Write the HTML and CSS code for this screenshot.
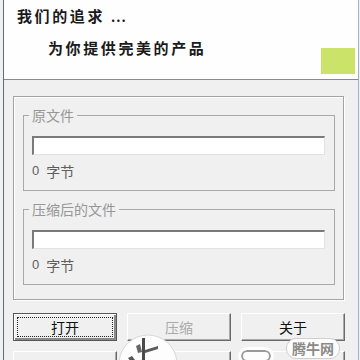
FILE: index.html
```html
<!DOCTYPE html>
<html lang="zh-CN">
<head>
<meta charset="utf-8">
<title>压缩</title>
<link rel="stylesheet" href="styles.css">
</head>
<body>
<div class="frame">
  <header class="banner">
    <div class="slogan">
      <p class="line1">我们的追求 <span class="dots">...</span></p>
      <p class="line2">为你提供完美的产品</p>
    </div>
    <div class="accent"></div>
  </header>
  <main class="content">
    <div class="outer">
      <fieldset class="group">
        <legend>原文件</legend>
        <div class="field"></div>
        <div class="size"><span class="num">0</span><span>字节</span></div>
      </fieldset>
      <fieldset class="group second-group">
        <legend>压缩后的文件</legend>
        <div class="field"></div>
        <div class="size"><span class="num">0</span><span>字节</span></div>
      </fieldset>
    </div>
    <div class="buttons">
      <button class="btn default"><span class="focus">打开</span></button>
      <button class="btn" disabled>压缩</button>
      <button class="btn">关于</button>
    </div>
    <div class="buttons lower">
      <button class="btn"></button>
      <button class="btn"></button>
      <button class="btn"></button>
    </div>
  </main>
  <div class="wm-circle">
    <svg width="60" height="60" viewBox="0 0 60 60">
      <circle cx="30" cy="30" r="29" fill="#fdfdfd" stroke="#d8d8d8" stroke-width="1"/>
      <path d="M24 4 L27 4 L27 30 L24 30 Z" fill="#4a4a4a"/>
      <path d="M10 24 L14 22 L20 30 L16 32 Z" fill="#555"/>
      <path d="M27 16 L40 12 L40 15 L27 19 Z" fill="#5a5a5a"/>
      <path d="M18 12 L22 10 L24 18 L20 19 Z" fill="#666"/>
    </svg>
  </div>
  <div class="wm-ring"></div>
  <div class="wm-badge">腾牛网</div>
</div>
</body>
</html>
```

FILE: styles.css
```css
* { box-sizing: border-box; }
html, body { margin: 0; padding: 0; background: #f0f0f0; }
body { width: 360px; height: 360px; overflow: hidden; font-family: "Noto Sans CJK SC", "Liberation Sans", sans-serif; }

.frame {
  position: relative;
  width: 356px;
  height: 360px;
  margin-left: 3px;
  border-left: 1px solid #5f6b78;
  border-right: 1px solid #9fb2cc;
  overflow: hidden;
  background: #f0f0f0;
}

.banner {
  height: 80px;
  background: #fefefe;
  border-bottom: 1px solid #8a8a8a;
  display: flex;
  padding-right: 3px;
}
.slogan { flex: 1; }
.slogan p {
  margin: 0;
  font-size: 15px;
  line-height: 20px;
  font-weight: 700;
  color: #1a1a1a;
  letter-spacing: 2.6px;
}
.dots { letter-spacing: 1px; font-size: 13px; }
.line1 { margin-top: 6px !important; padding-left: 13px; }
.line2 { margin-top: 11px !important; padding-left: 44px; }
.accent {
  align-self: flex-end;
  width: 34px;
  height: 26px;
  margin-bottom: 5px;
  background: #cce36a;
}

.content { padding: 16px 0 0 9px; }

.outer {
  width: 331px;
  border: 1px solid #a3a3a3;
  box-shadow: inset 1px 1px 0 #fff, 1px 1px 0 #fff;
  padding: 10px 9px 14px 9px;
}

.group {
  margin: 0;
  width: 312px;
  border: 1px solid #a8a8a8;
  padding: 13px 9px 11px 8px;
  min-width: 0;
}
.second-group { margin-top: 10px; }
.group legend {
  font-size: 14px;
  line-height: 16px;
  color: #979797;
  padding: 0 3px;
  margin-left: -3px;
}
.field {
  height: 19px;
  background: #fff;
  border-top: 2px solid #7a7a7a;
  border-left: 2px solid #7a7a7a;
  border-bottom: 1px solid #e2e2e2;
  border-right: 1px solid #e2e2e2;
}
.size {
  margin-top: 8px;
  font-size: 14px;
  line-height: 16px;
  color: #5e5e5e;
  display: flex;
  gap: 7px;
}
.num { font-family: "Liberation Sans", sans-serif; font-size: 13px; }

.buttons {
  margin-top: 13px;
  width: 332px;
  display: grid;
  grid-template-columns: repeat(3, 1fr);
  column-gap: 10px;
}
.buttons.lower { margin-top: 10px; }
.btn {
  height: 28px;
  margin: 0;
  padding: 0;
  background: #f0f0f0;
  border: 1px solid;
  border-color: #ffffff #6b6b6b #6b6b6b #ffffff;
  box-shadow: inset -1px -1px 0 #a8a8a8;
  font-family: "Noto Sans CJK SC", sans-serif;
  font-size: 14px;
  color: #111;
  display: flex;
  align-items: center;
  justify-content: center;
}
.btn:disabled { color: #a9a9a9; }
.btn.default {
  border: 1px solid #555;
  box-shadow: inset 1px 1px 0 #fff, inset -2px -2px 0 #8a8a8a;
  padding: 3px;
}
.focus {
  flex: 1;
  align-self: stretch;
  border: 1px dotted #222;
  display: flex;
  align-items: center;
  justify-content: center;
}

.wm-circle {
  position: absolute;
  left: 114px;
  top: 334px;
  width: 60px;
  height: 60px;
}
.wm-circle svg { display: block; }
.wm-ring {
  position: absolute;
  left: 234px;
  top: 347px;
  width: 36px;
  height: 18px;
  border-radius: 9px;
  background: #fdfdfd;
  border: 3px solid #fdfdfd;
  box-shadow: inset 0 0 0 2px #9a9a9a;
}
.wm-badge {
  position: absolute;
  left: 282px;
  top: 338px;
  width: 54px;
  height: 21px;
  border-radius: 10px;
  background: #fdfdfd;
  border: 1px solid #cfcfcf;
  font-size: 14px;
  font-weight: 700;
  line-height: 19px;
  color: #8a8a8a;
  text-align: center;
}
```
